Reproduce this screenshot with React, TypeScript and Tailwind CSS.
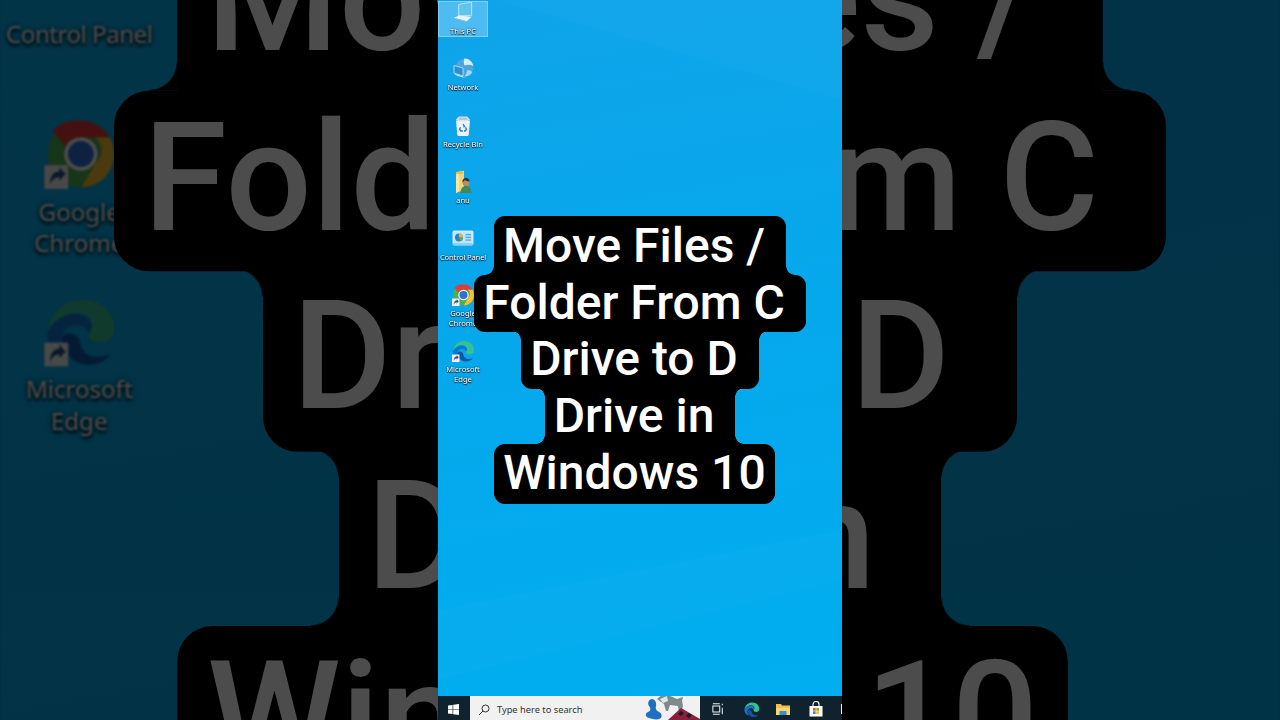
import { ReactNode } from 'react'

const lineClass = 'relative whitespace-pre bg-black px-[9px] shadow-[0_1px_0_#000]'

// Inverted corner that joins a narrow caption line to a wider neighbour
function Fillet({ className }: { className: string }) {
  return <span className={`absolute h-[9px] w-[9px] ${className}`} />
}

const filletTL = '-left-[9px] top-0 bg-[radial-gradient(circle_at_0_100%,transparent_8.5px,#000_9px)]'
const filletTR = '-right-[9px] top-0 bg-[radial-gradient(circle_at_100%_100%,transparent_8.5px,#000_9px)]'
const filletBL = '-left-[9px] bottom-0 bg-[radial-gradient(circle_at_0_0,transparent_8.5px,#000_9px)]'
const filletBR = '-right-[9px] bottom-0 bg-[radial-gradient(circle_at_100%_0,transparent_8.5px,#000_9px)]'

function Caption() {
  return (
    <div className="absolute inset-x-0 top-[216px] flex flex-col items-center font-['Roboto',sans-serif] text-[48px] font-medium text-white">
      <div className={`${lineClass} h-[59px] rounded-t-[11px] pt-px leading-[57px]`}>
        {'Move Files / '}
        <Fillet className={filletBL} />
        <Fillet className={filletBR} />
      </div>
      <div className={`${lineClass} h-[56px] rounded-[11px] leading-[55px]`}>{'Folder From C '}</div>
      <div className={`${lineClass} h-[57px] rounded-b-[11px] leading-[56px]`}>
        {'Drive to D '}
        <Fillet className={filletTL} />
        <Fillet className={filletTR} />
      </div>
      <div className={`${lineClass} h-[56px] leading-[56px]`}>
        {'Drive in '}
        <Fillet className={filletTL} />
        <Fillet className={filletTR} />
        <Fillet className={filletBL} />
        <Fillet className={filletBR} />
      </div>
      <div className={`${lineClass} mr-[11px] h-[59px] rounded-[11px] leading-[57px]`}>Windows 10</div>
    </div>
  )
}

function ShortcutArrow() {
  return (
    <g>
      <rect x="1" y="15.500" width="7.500" height="7.500" fill="#f0f0f0" />
      <path d="M2.800 21.500c0-2.500.9-3.900 2.900-4.100V16.200l2 2.100-2 2.100v-1.200c-1.200.1-2.100.7-2.900 2.300z" fill="#1c4f8f" />
    </g>
  )
}

function ThisPcIcon() {
  return (
    <svg viewBox="0 0 24 24" className="h-[24px] w-[24px]">
      <path d="M7.500 2.500 21 0v14L7.500 14.500z" fill="#62c4ee" stroke="#d5eefb" strokeWidth="0.8" />
      <path d="M2.500 16.500 8 14l13 1.500-5 4.500z" fill="#e6f3fa" />
      <path d="M2.500 16.500 16 20v1.200L2.500 17.600z" fill="#8fb9d3" />
    </svg>
  )
}

function NetworkIcon() {
  return (
    <svg viewBox="0 0 24 24" className="h-[24px] w-[24px]">
      <circle cx="13.500" cy="10.500" r="9" fill="#4aa6dd" />
      <path d="M13.500 1.500c4.500 0 8 3.500 9 7.500-3-1.500-6-1.500-9-.5-1-2.500-1-5 0-7z" fill="#d7eefb" />
      <path d="M21.500 15c-1.800 3-4.500 4.500-8 4.500 1.500-2 2.500-4 2.800-6.500 2 0 3.800 .7 5.200 2z" fill="#a5d9f4" />
      <path d="M3 8.500 12 11v8L3 16z" fill="#2b8fd4" stroke="#c5e6f8" strokeWidth="0.8" />
      <path d="M3 16.500l9 3 2.500 1.500L6 18.800z" fill="#d9edf9" />
    </svg>
  )
}

function RecycleBinIcon() {
  return (
    <svg viewBox="0 0 24 24" className="h-[24px] w-[24px]">
      <path d="M5 6.500h14L17.700 21a2 2 0 0 1-1.500 1H7.800a2 2 0 0 1-1.500-1z" fill="#eef3f6" />
      <path d="M5 5.500 8 2.500h8l3 3-3 2H8z" fill="#dce6ec" />
      <path d="M8.300 3.500h7.400l1.300 1.700-3 .8h-5l-2-.8z" fill="#b5c4ce" />
      <path d="M12 10l1.600 2.600-1.200.6M9.500 13.200l-1 2 1.300 1.800h2M14.500 13.400l1 1.800-1.200 1.800H13" fill="none" stroke="#1e7fd0" strokeWidth="1.300" />
    </svg>
  )
}

function UserFolderIcon() {
  return (
    <svg viewBox="0 0 24 24" className="h-[24px] w-[24px]">
      <path d="M5 2 13 .8V20l-8 3z" fill="#f3d678" />
      <path d="M5 2h7v2l-7 .8z" fill="#e8bc47" />
      <path d="M5 4.500 8 3.800V21l-3 2z" fill="#f8e6a4" />
      <path d="M9.500 23c0-4.500 2.300-7 5.500-7s5.500 2.500 5.500 7z" fill="#3e8a5a" />
      <circle cx="15" cy="12.500" r="3.600" fill="#c08a63" />
      <path d="M11.400 12c0-2.600 1.600-4 3.600-4s3.600 1.400 3.600 3.400c-2.400 0-4-.6-4.800-1.400-.4.800-1.200 1.600-2.400 2z" fill="#2f3338" />
    </svg>
  )
}

function ControlPanelIcon() {
  return (
    <svg viewBox="0 0 24 24" className="h-[24px] w-[24px]">
      <rect x="2" y="4" width="20" height="14" rx="1" fill="#bfe6f8" stroke="#eaf7fd" strokeWidth="0.8" />
      <circle cx="8" cy="10.500" r="4" fill="#2f7ec4" />
      <path d="M8 10.500v-4a4 4 0 0 1 4 4z" fill="#f0b43c" />
      <path d="M8 10.500h4a4 4 0 0 1-2.700 3.800z" fill="#59b25a" />
      <rect x="14.500" y="7" width="5.500" height="1.300" fill="#4fa3d8" />
      <rect x="14.500" y="9.700" width="5.500" height="1.300" fill="#4fa3d8" />
      <rect x="14.500" y="12.400" width="5.500" height="1.300" fill="#4fa3d8" />
      <rect x="2" y="16" width="20" height="2" fill="#8fd0ef" />
    </svg>
  )
}

function ChromeLogo() {
  return (
    <svg viewBox="0 0 24 24" className="h-[24px] w-[24px]">
      <circle cx="12.500" cy="12" r="10.500" fill="#4caf50" />
      <path d="M12.500 1.500a10.500 10.500 0 0 1 9.100 5.250h-9.100a5.250 5.250 0 0 0-4.700 2.900L3.500 4.700a10.500 10.500 0 0 1 9-3.200z" fill="#e53935" />
      <path d="M21.600 6.750A10.500 10.500 0 0 1 12.800 22.500l4.300-7.600a5.250 5.250 0 0 0 0-8.150z" fill="#fbc02d" />
      <circle cx="12.500" cy="12" r="5.250" fill="#fff" />
      <circle cx="12.500" cy="12" r="4.100" fill="#2a72d4" />
      <ShortcutArrow />
    </svg>
  )
}

function EdgeShape({ arrow }: { arrow?: boolean }) {
  return (
    <svg viewBox="0 0 24 24" className="h-full w-full">
      <path d="M2 12C3 5.500 8 2 13 2c6 0 10 4 10 9 0 3-2 4.500-4.500 4.500-2 0-3.500-.7-3.500-2 0-1.500 1-1.600 1-3.500 0-2.500-2.500-4.500-5.500-4C7 6.500 3.500 9 2 12z" fill="#35c18f" />
      <path d="M2 12c1.500-3 5-5.500 8.500-5.500 3 0 5.500 1.800 5.500 4 0 1-.6 1.500-1 2-1-3-6-3.500-8 0-1.500 2.500-.5 6 1.500 8-4-.8-7-4.500-6.500-8.500z" fill="#0f76cc" />
      <path d="M6.500 14c0 4.500 3.500 8.500 8.500 8.500 3 0 5.500-1.500 7-3.500-1.500.8-3 1-4.500 1-4 0-5-3-5.500-5.500-1.500-2.500-4.500-2.500-5.500-.5z" fill="#0d56a8" />
      {arrow && <ShortcutArrow />}
    </svg>
  )
}

type DesktopItem = { label: ReactNode; icon: ReactNode; selected?: boolean; nowrap?: boolean }

const items: DesktopItem[] = [
  { label: 'This PC', icon: <ThisPcIcon />, selected: true },
  { label: 'Network', icon: <NetworkIcon /> },
  { label: 'Recycle Bin', icon: <RecycleBinIcon /> },
  { label: 'anu', icon: <UserFolderIcon /> },
  { label: 'Control Panel', icon: <ControlPanelIcon />, nowrap: true },
  { label: 'Google Chrome', icon: <ChromeLogo /> },
  { label: 'Microsoft Edge', icon: <div className="h-[24px] w-[24px]"><EdgeShape arrow /></div> },
]

function DesktopIcons() {
  return (
    <div className="relative flex w-[50px] flex-col pt-px font-['Noto_Sans',sans-serif] text-[7.6px] leading-[10px] text-white blur-[0.3px] [text-shadow:0_0_2px_rgba(0,0,0,0.9),0_1px_1px_rgba(0,0,0,0.9)]">
      {items.map((item, i) => (
        <div key={i} className="h-[56.4px]">
          <div className={`flex flex-col items-center text-center ${item.selected ? 'h-[36px] border border-[#7fd0f7] bg-[#4dbcf2]' : ''}`}>
            {item.icon}
            <span className={item.nowrap ? 'mt-[1px] whitespace-nowrap tracking-[-0.15px]' : 'mt-[1px] w-[48px]'}>{item.label}</span>
          </div>
        </div>
      ))}
    </div>
  )
}

function Taskbar() {
  return (
    <div className="absolute inset-x-0 bottom-0 flex h-[24px] items-center bg-[#10222d] pt-[2px]">
      <div className="flex w-[32px] justify-center">
        <svg viewBox="0 0 12 12" className="h-[11px] w-[11px]">
          <path d="M0 1.700 5 1v4.700H0zM5.700.9 12 0v5.700H5.700zM0 6.300h5V11l-5-.7zM5.700 6.300H12V12l-6.300-.9z" fill="#fff" />
        </svg>
      </div>
      <div className="relative -mt-[2px] flex h-[24px] w-[231px] items-center overflow-hidden bg-[#f1f1f1] pl-[8px] pt-[3px] font-['Noto_Sans',sans-serif] text-[9.3px] text-[#333]">
        <svg viewBox="0 0 12 12" className="h-[12px] w-[12px]" fill="none" stroke="#333" strokeWidth="1">
          <circle cx="7.500" cy="4.500" r="3.500" />
          <path d="M5 7 1 11" />
        </svg>
        <span className="ml-[7px]">Type here to search</span>
        {/* doodle at the right of the box */}
        <svg viewBox="0 0 60 28" className="absolute right-0 top-[-4px] h-[28px] w-[60px]">
          <path d="M9 26c-4-1-4-5-1-6 3-1 3-3 1-6-2-3 0-7 3-7s5 4 4 7c-1 3 1 5 3 6 3 1 4 6 0 7-3 1-6 0-10-1z" fill="#1f6fc0" />
          <path d="M17 7 23 2l2 2 3-1 9 4 6-2-1 4 1 5-2 6h-2l-1-6-8-1-2 6h-2l-2-7z" fill="#7f8a8f" />
          <path d="M20 7l7-3 1 5-5 2z" fill="#e3e5e5" />
          <path d="M28 28 41 16l19 11v1z" fill="#8c1f3c" />
          <path d="M38 22l3-3 3 2-3 3zM46 24l3-3 3 2-3 3z" fill="#1c1c1c" />
        </svg>
      </div>
      <div className="ml-[6px] flex w-[23px] justify-center">
        <svg viewBox="0 0 14 14" className="h-[12px] w-[12px]" fill="none" stroke="#e8eef1" strokeWidth="1.200">
          <rect x="1" y="3.500" width="8" height="7" />
          <path d="M1 1h8M1 13h8M12 1v1.500M12 5.500V13" />
        </svg>
      </div>
      <div className="ml-[12px] flex w-[20px] justify-center">
        <div className="h-[17px] w-[17px]">
          <EdgeShape />
        </div>
      </div>
      <div className="ml-[12px] flex w-[20px] justify-center">
        <svg viewBox="0 0 16 14" className="h-[14px] w-[16px]">
          <path d="M1 2h5l1 1.500h8V13H1z" fill="#f3c14b" />
          <rect x="1" y="6" width="14" height="7" fill="#f7d774" />
          <rect x="4.500" y="9" width="7" height="4" fill="#3a8fc7" />
        </svg>
      </div>
      <div className="ml-[13px] flex w-[20px] justify-center">
        <svg viewBox="0 0 16 16" className="h-[16px] w-[16px]">
          <path d="M5 5V3.500a3 3 0 0 1 6 0V5" fill="none" stroke="#fff" strokeWidth="1.100" />
          <rect x="1.500" y="5" width="13" height="10.500" fill="#fff" />
          <rect x="5" y="7" width="2.700" height="2.700" fill="#e8532b" />
          <rect x="8.300" y="7" width="2.700" height="2.700" fill="#6fb52c" />
          <rect x="5" y="10.300" width="2.700" height="2.700" fill="#1c9ad6" />
          <rect x="8.300" y="10.300" width="2.700" height="2.700" fill="#f5b912" />
        </svg>
      </div>
      <div className="ml-[15px] h-[10px] w-px bg-[#e8eef1]" />
    </div>
  )
}

function Desktop({ tint }: { tint?: boolean }) {
  return (
    <div className="relative h-[720px] w-[404px] shrink-0 overflow-hidden bg-[linear-gradient(170deg,#10a4ea_0%,#06a8ec_45%,#00aeef_100%)]">
      {/* light rays of the wallpaper */}
      <svg viewBox="0 0 404 720" className="absolute inset-0 h-full w-full">
        <path d="M60 0 404 100V0z" fill="#fff" opacity="0.02" />
        <path d="M0 610 404 530v50L0 680z" fill="#fff" opacity="0.02" />
      </svg>
      {tint && <div className="absolute inset-y-0 left-0 w-[140px] bg-[linear-gradient(180deg,#00c8ff66,#00b0e02e_55%,transparent_70%)]" />}
      <DesktopIcons />
      <Caption />
      <Taskbar />
    </div>
  )
}

export default function App() {
  return (
    <div className="relative h-[720px] w-[1280px] overflow-hidden bg-black">
      <div className="absolute inset-0 flex items-center justify-center">
        <div className="scale-[3.168] brightness-[0.3]">
          <Desktop tint />
        </div>
      </div>
      <div className="relative flex justify-center">
        <Desktop />
      </div>
    </div>
  )
}
